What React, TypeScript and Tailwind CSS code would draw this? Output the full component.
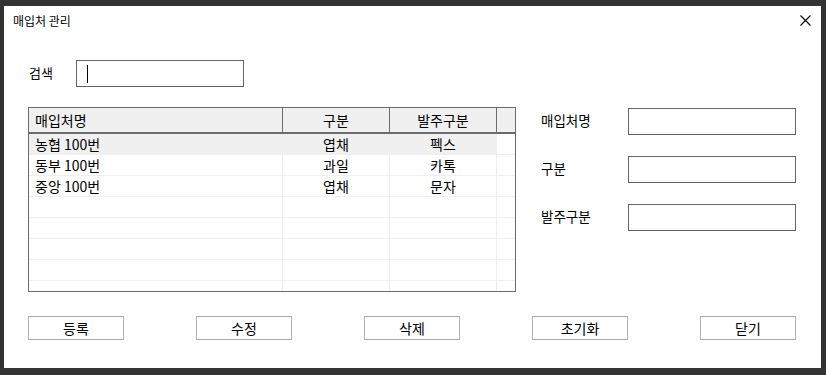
import React from 'react';

const rows = [
  { name: '농협 100번', kind: '엽채', order: '펙스' },
  { name: '동부 100번', kind: '과일', order: '카톡' },
  { name: '중앙 100번', kind: '엽채', order: '문자' },
  { name: '', kind: '', order: '' },
  { name: '', kind: '', order: '' },
  { name: '', kind: '', order: '' },
  { name: '', kind: '', order: '' },
  { name: '', kind: '', order: '' },
];

const buttons = ['등록', '수정', '삭제', '초기화', '닫기'];

function TextBox({ cursor }: { cursor?: boolean }) {
  return (
    <div className="w-[168px] h-[27px] border border-[#646464] bg-white flex items-center pl-[10px]">
      {cursor && <span className="w-px h-[18px] bg-black" />}
    </div>
  );
}

export default function App() {
  return (
    <div className="w-[826px] h-[375px] bg-[#333333] pt-[6px] pl-[4px] pr-[5px] pb-[7px] font-['Noto_Sans_CJK_KR',sans-serif] text-black">
      <div className="bg-white h-full flex flex-col">
        {/* Title bar */}
        <div className="h-[29px] flex items-center justify-between pl-[9px] pr-[10px]">
          <span className="text-[12px] leading-none">매입처 관리</span>
          <svg width="11" height="11" viewBox="0 0 11 11" className="shrink-0">
            <path d="M0.5 0.5 L10.5 10.5 M10.5 0.5 L0.5 10.5" stroke="#000" strokeWidth="1.1" fill="none" />
          </svg>
        </div>

        {/* Search */}
        <div className="mt-[25px] flex items-center pl-[25px] h-[27px]">
          <span className="w-[47px] text-[13px] leading-none -mt-[3px]">검색</span>
          <TextBox cursor />
        </div>

        {/* Grid + form */}
        <div className="mt-[20px] flex pl-[24px]">
          <div className="w-[488px] h-[185px] border border-[#6b6b6b] overflow-hidden flex flex-col">
            <div className="flex h-[26px] shrink-0 border-b-2 border-[#6b6b6b] bg-[#f0f0f0] text-[14px] leading-none">
              <div className="w-[254px] border-r border-[#6b6b6b] flex items-center pl-[6px]">매입처명</div>
              <div className="w-[107px] border-r border-[#6b6b6b] flex items-center justify-center">구분</div>
              <div className="w-[107px] border-r border-[#6b6b6b] flex items-center justify-center">발주구분</div>
              <div className="w-[18px]" />
            </div>
            {rows.map((r, i) => (
              <div key={i} className="flex h-[21px] shrink-0 border-b border-[#efefef] text-[14px] leading-none">
                <div className={`w-[254px] border-r border-[#efefef] flex items-center pl-[6px] ${i === 0 ? 'bg-[#f0f0f0]' : ''}`}>{r.name}</div>
                <div className={`w-[107px] border-r border-[#efefef] flex items-center justify-center ${i === 0 ? 'bg-[#f0f0f0]' : ''}`}>{r.kind}</div>
                <div className={`w-[107px] border-r border-[#efefef] flex items-center justify-center ${i === 0 ? 'bg-[#f0f0f0]' : ''}`}>{r.order}</div>
                <div className="w-[18px]" />
              </div>
            ))}
          </div>

          <div className="ml-[25px] pt-[1px] flex flex-col gap-[21px]">
            {['매입처명', '구분', '발주구분'].map((label) => (
              <div key={label} className="flex items-center h-[27px]">
                <span className="w-[87px] text-[13.5px] leading-none -mt-[2px]">{label}</span>
                <TextBox />
              </div>
            ))}
          </div>
        </div>

        {/* Buttons */}
        <div className="mt-[24px] flex gap-[72px] pl-[24px]">
          {buttons.map((b) => (
            <button key={b} className="w-[96px] h-[24px] border border-[#adadad] bg-white text-[14px] leading-none flex items-center justify-center">
              {b}
            </button>
          ))}
        </div>
      </div>
    </div>
  );
}
